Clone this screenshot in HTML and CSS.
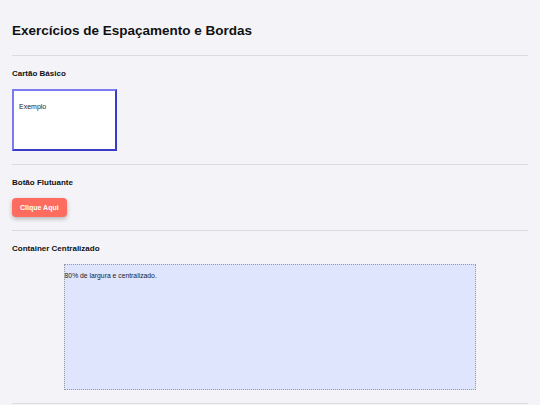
FILE: index.html
```html
<!DOCTYPE html>
<html lang="pt">
<head>
<meta charset="utf-8">
<title>Exercícios de Espaçamento e Bordas</title>
<link rel="stylesheet" href="styles.css">
</head>
<body>
<header class="page-header">
  <h1 class="title">Exercícios de Espaçamento e Bordas</h1>
</header>
<section class="section">
  <h2 class="section-title">Cartão Básico</h2>
  <div class="card">Exemplo</div>
</section>
<section class="section">
  <h2 class="section-title">Botão Flutuante</h2>
  <button class="float-btn">Clique Aqui</button>
</section>
<section class="section">
  <h2 class="section-title">Container Centralizado</h2>
  <div class="centered">
    <p class="centered-text">80% de largura e centralizado.</p>
  </div>
</section>
</body>
</html>
```
FILE: styles.css
```css
html, body {
  margin: 0;
  background: #f4f4f8;
}
body {
  padding: 0 12px;
  font-family: "Liberation Sans", Arial, sans-serif;
  color: #111;
}
.page-header {
  padding: 23px 0 16px;
  border-bottom: 1px solid #dcdce0;
}
.title {
  margin: 0;
  font-size: 13.5px;
  line-height: 16px;
  font-weight: bold;
  color: #111;
}
.section {
  padding: 13px 0;
  border-bottom: 1px solid #dcdce0;
}
.section-title {
  margin: 0 0 10px;
  font-size: 8px;
  line-height: 10px;
  font-weight: bold;
}
.card {
  box-sizing: border-box;
  width: 105px;
  height: 62px;
  padding: 12px 5px;
  background: #fff;
  border: 2px solid;
  border-color: #7b7bf0 #3b3bc8 #3b3bc8 #7b7bf0;
  font-size: 7px;
  line-height: 8px;
  color: #222;
}
.float-btn {
  display: block;
  box-sizing: border-box;
  height: 19px;
  padding: 0 8px;
  border: none;
  border-radius: 4px;
  background: #fd6c5e;
  color: #fff;
  font-family: "Liberation Sans", Arial, sans-serif;
  font-size: 7px;
  font-weight: bold;
  box-shadow: 0 2px 4px rgba(0, 0, 0, 0.25);
}
.centered {
  box-sizing: border-box;
  width: 80%;
  height: 126px;
  margin: 0 auto;
  background: #e0e5fe;
  border: 1px dotted #999;
}
.centered-text {
  margin: 7px 0;
  font-size: 6.8px;
  line-height: 8px;
  color: #222;
}
```
